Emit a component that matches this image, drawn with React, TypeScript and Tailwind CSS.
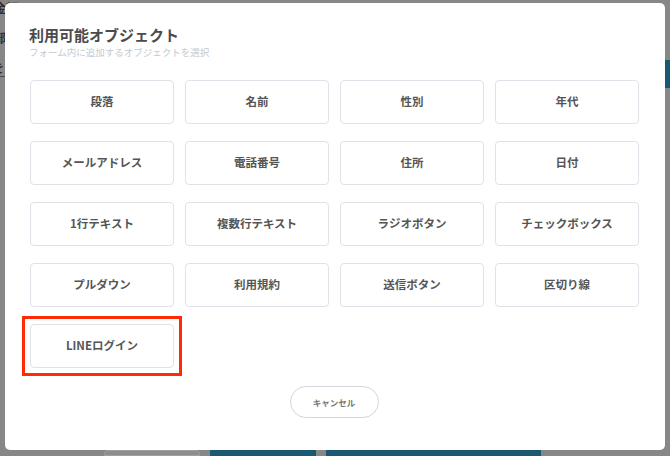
import type { FC } from 'react';

const objects = [
    '段落', '名前', '性別', '年代',
    'メールアドレス', '電話番号', '住所', '日付',
    '1行テキスト', '複数行テキスト', 'ラジオボタン', 'チェックボックス',
    'プルダウン', '利用規約', '送信ボタン', '区切り線',
];

const font = { fontFamily: '"Noto Sans CJK JP", "Noto Sans", sans-serif' };

const ObjectButton: FC<{ label: string }> = ({ label }) => (
    <button className="h-[44px] w-full rounded-[4px] border border-[#dfe2e8] bg-white text-[11.5px] font-bold text-[#555]">
        {label}
    </button>
);

// 背景のページ（モーダルで暗くなっている部分）
const Backdrop: FC = () => (
    <div className="flex h-full flex-col justify-between bg-[#878787]">
        <div className="flex flex-col gap-[18px] pt-[2px] text-[12px] font-bold leading-none text-[#2f2f2f]">
            <span className="-ml-[6px]">金額</span>
            <span className="-ml-[6px]">部</span>
            <span className="-ml-[8px] border-b border-[#4a4a4a] pb-[2px]">を</span>
        </div>
        <div className="flex items-end gap-[10px] pl-[104px]">
            <div className="h-[6px] w-[96px] rounded-t-[4px] border border-[#a0a0a0] bg-[#8d8d8d]" />
            <div className="h-[6px] w-[106px] bg-[#185872]" />
            <div className="h-[6px] w-[215px] bg-[#185872]" />
        </div>
    </div>
);

export default function App() {
    return (
        <div className="relative h-[456px] w-[670px] overflow-hidden" style={font}>
            <Backdrop />
            <div className="absolute right-0 top-[60px] h-[28px] w-[5px] bg-[#185872]" />
            <div className="absolute left-[5px] top-[3px] w-[660px] rounded-[5px] bg-white pb-[32px] pl-[24px] pr-[26px] pt-[22px]">
                <h2 className="text-[15px] font-bold leading-[20px] text-[#4b4b4b]">利用可能オブジェクト</h2>
                <p className="text-[9.5px] leading-[14px] text-[#c5c9d0]">フォーム内に追加するオブジェクトを選択</p>
                <div className="ml-[1px] mt-[21px] grid grid-cols-4 gap-x-[11px] gap-y-[17px]">
                    {objects.map((o) => (
                        <ObjectButton key={o} label={o} />
                    ))}
                    <div className="-m-[8px] border-[3px] border-[#ff2b06] p-[5px]">
                        <ObjectButton label="LINEログイン" />
                    </div>
                </div>
                <div className="mt-[18px] flex justify-center">
                    <button className="h-[32px] w-[89px] rounded-full border border-[#d3d6dd] bg-white text-[8.5px] font-bold text-[#777]">
                        キャンセル
                    </button>
                </div>
            </div>
        </div>
    );
}
